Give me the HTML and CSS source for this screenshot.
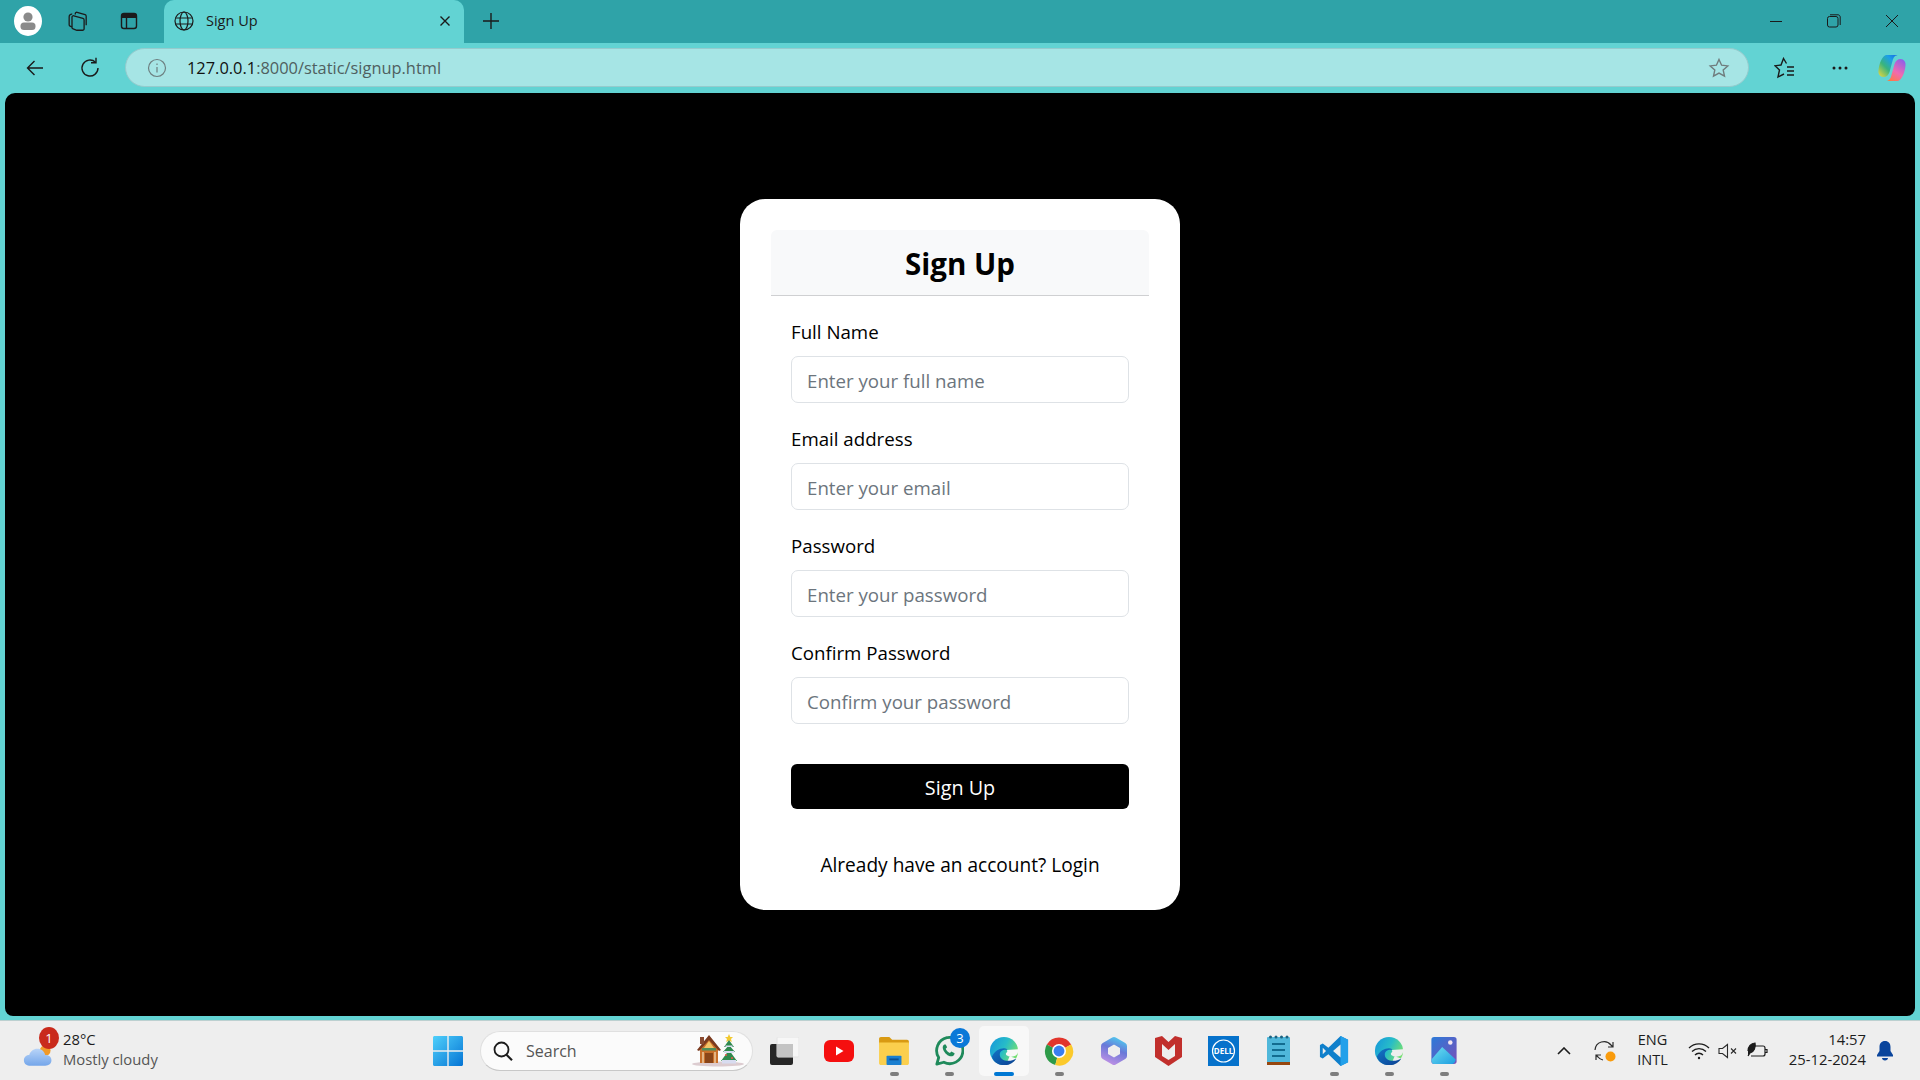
FILE: index.html
```html
<!DOCTYPE html>
<html>
	<head>
		<title>Sign Up</title>
		<link rel="stylesheet" href="styles.css">
	</head>
	<body>
		<!-- tab strip -->
		<div class="tabstrip">
			<div class="strip-left">
				<div class="avatar">
					<svg width="30" height="30" viewBox="0 0 30 30"><ellipse cx="15" cy="15" rx="14" ry="15" fill="#fff"/><circle cx="15" cy="11" r="4.600" fill="#8a8a8a"/><rect x="7.500" y="16.500" width="15" height="7.500" rx="3.500" fill="#8a8a8a"/></svg>
				</div>
				<button class="strip-btn">
					<svg width="24" height="24" viewBox="0 0 22 22" fill="none" stroke="#1b1b1b" stroke-width="1.200"><path d="M10 19.500l-3.500-1.200c-.6-.2-1-.8-1-1.400V7.500c0-1 .9-1.500 1.700-1.300l8.300 2.400c.7.200 1.100.8 1.100 1.400V18c0 1-.9 1.700-1.800 1.400z"/><path d="M8.500 5V4.300c0-.9.900-1.500 1.700-1.300l7.300 2.200c.6.200 1 .800 1 1.400v8.400"/><path d="M5.500 16.500l-1.800-.8c-.5-.2-.8-.8-.8-1.300V7c0-1.500 1.300-2.600 2.800-2.300"/></svg>
				</button>
				<button class="strip-btn">
					<svg width="20" height="20" viewBox="0 0 20 20" fill="none" stroke="#1b1b1b" stroke-width="1.400"><rect x="2.500" y="2.500" width="15" height="15" rx="2.500"/><path d="M3 5h14" stroke-width="4"/><path d="M7.500 6v11"/></svg>
				</button>
			</div>
			<div class="tab">
				<svg width="22" height="22" viewBox="0 0 22 22" fill="none" stroke="#1a1a1a" stroke-width="1.200"><circle cx="11" cy="11" r="9"/><ellipse cx="11" cy="11" rx="4" ry="9"/><path d="M2.800 8h16.400M2.800 14h16.400"/></svg>
				<span class="tab-title">Sign Up</span>
				<svg class="tab-close" width="12" height="12" viewBox="0 0 12 12" stroke="#1a1a1a" stroke-width="1.400"><path d="M1.500 1.500l9 9M10.500 1.500l-9 9"/></svg>
			</div>
			<svg class="new-tab" width="18" height="18" viewBox="0 0 18 18" stroke="#1a1a1a" stroke-width="1.400"><path d="M9 1v16M1 9h16"/></svg>
			<div class="win-controls">
				<svg width="14" height="14" viewBox="0 0 14 14" stroke="#1a1a1a"><path d="M1 7.500h12"/></svg>
				<svg width="14" height="14" viewBox="0 0 14 14" fill="none" stroke="#1a1a1a"><rect x=".5" y="2.500" width="10.500" height="10.500" rx="2"/><path d="M3 .8h8c1.200 0 2.200 1 2.200 2.200v8"/></svg>
				<svg width="14" height="14" viewBox="0 0 14 14" stroke="#1a1a1a"><path d="M1 1l12 12M13 1L1 13"/></svg>
			</div>
		</div>

		<!-- address bar row -->
		<div class="toolbar">
			<button class="nav-btn">
				<svg width="20" height="20" viewBox="0 0 20 20" fill="none" stroke="#1a1a1a" stroke-width="1.400"><path d="M18 10H2.500M9.500 3l-7 7 7 7"/></svg>
			</button>
			<button class="nav-btn">
				<svg width="20" height="22" viewBox="0 0 20 22" fill="none" stroke="#1a1a1a" stroke-width="1.400"><path d="M15.500 5.200A8 8 0 1 0 18 11"/><path d="M16 .8v5h-5"/></svg>
			</button>
			<div class="address">
				<svg width="20" height="20" viewBox="0 0 20 20" fill="none" stroke="#6d7f80" stroke-width="1.200"><circle cx="10" cy="10" r="8.500"/><path d="M10 9v5.500M10 5.500v1.500"/></svg>
				<span class="url"><span class="url-host">127.0.0.1</span>:8000/static/signup.html</span>
				<svg class="fav-star" width="22" height="22" viewBox="0 0 22 22" fill="none" stroke="#6f7c7d" stroke-width="1.400"><path d="M11 2.500l2.600 5.700 6.200.700-4.600 4.200 1.300 6.100L11 16.100l-5.500 3.100 1.300-6.100-4.600-4.200 6.200-.700z"/></svg>
			</div>
			<div class="tool-icons">
				<svg width="22" height="22" viewBox="0 0 22 22" fill="none" stroke="#1a1a1a" stroke-width="1.400"><path d="M12.500 6.500L9.500 1.500 7 8l-6 .8 4.500 4.200L4 20l6-3"/><path d="M13 10h7M13 14h7M13 18h7"/></svg>
				<svg width="16" height="4" viewBox="0 0 16 4" fill="#1a1a1a"><circle cx="2" cy="2" r="1.500"/><circle cx="8" cy="2" r="1.500"/><circle cx="14" cy="2" r="1.500"/></svg>
				<svg width="28" height="28" viewBox="0 0 28 28" fill="none"><defs><linearGradient id="cp1" x1="0" y1="1" x2="1" y2="0"><stop offset="0" stop-color="#f2d93a"/><stop offset=".4" stop-color="#38b47e"/><stop offset=".7" stop-color="#1c9fe8"/><stop offset="1" stop-color="#1560e0"/></linearGradient><linearGradient id="cp2" x1=".2" y1="1" x2=".8" y2="0"><stop offset="0" stop-color="#ff7a3d"/><stop offset=".45" stop-color="#f06ab0"/><stop offset="1" stop-color="#8f5fe8"/></linearGradient></defs><path d="M8 1h13c-4 0-5.500 2-6.500 6l-3 11c-1 3-3 5-6 5-3.500 0-5.500-3-5-6.500C1 10 4 2 8 1z" fill="url(#cp1)"/><path d="M20 27H7c4 0 5.500-2 6.500-6l3-11c1-3 3-5 6-5 3.500 0 5.500 3 5 6.500C27 18 24 26 20 27z" fill="url(#cp2)"/></svg>
			</div>
		</div>

		<!-- page -->
		<div class="viewport">
			<div class="card">
				<div class="card-header"><h2>Sign Up</h2></div>
				<form class="card-body">
					<div class="field">
						<label>Full Name</label>
						<input type="text" placeholder="Enter your full name">
					</div>
					<div class="field">
						<label>Email address</label>
						<input type="text" placeholder="Enter your email">
					</div>
					<div class="field">
						<label>Password</label>
						<input type="text" placeholder="Enter your password">
					</div>
					<div class="field">
						<label>Confirm Password</label>
						<input type="text" placeholder="Confirm your password">
					</div>
					<button type="button" class="submit">Sign Up</button>
				</form>
				<p class="login-line">Already have an account? Login</p>
			</div>
		</div>

		<!-- windows taskbar -->
		<div class="taskbar">
			<div class="weather">
				<div class="weather-icon">
					<svg width="32" height="28" viewBox="0 0 36 30"><defs><linearGradient id="cloud" x1="0" y1="0" x2="0" y2="1"><stop offset="0" stop-color="#b8d4f8"/><stop offset="1" stop-color="#74a6ea"/></linearGradient></defs><circle cx="25" cy="10" r="6" fill="#f09a2a"/><path d="M7 27c-4 0-6-3-6-6s2-6 6-6c1-4 5-7 9-7 5 0 8 3 9 7 4 0 7 2 7 6s-3 6-7 6z" fill="url(#cloud)"/></svg>
					<span class="weather-badge">1</span>
				</div>
				<div class="weather-text">
					<span class="temp">28°C</span>
					<span class="cond">Mostly cloudy</span>
				</div>
			</div>

			<div class="task-center">
				<div class="task-item start">
					<svg width="30" height="30" viewBox="0 0 30 30"><defs><linearGradient id="winblue" x1="0" y1="0" x2="1" y2="1"><stop offset="0" stop-color="#4fd0fb"/><stop offset="1" stop-color="#0574d4"/></linearGradient></defs><path d="M0 1.500C0 .7.700 0 1.500 0h12.800v14.300H0zM15.700 0h12.800c.8 0 1.500.7 1.500 1.500v12.800H15.700zM0 15.700h14.300V30H1.500C.7 30 0 29.300 0 28.500zM15.700 15.700H30v12.800c0 .8-.7 1.500-1.500 1.500H15.700z" fill="url(#winblue)"/></svg>
				</div>
				<div class="searchbox">
					<svg width="22" height="22" viewBox="0 0 22 22" fill="none" stroke="#1c1c1c" stroke-width="1.800"><circle cx="9.500" cy="9.500" r="7"/><path d="M14.500 14.800l5.500 5.500" stroke-width="2.200"/></svg>
					<span class="search-label">Search</span>
					<svg class="search-art" width="54" height="34" viewBox="0 0 54 34"><ellipse cx="27" cy="30" rx="26" ry="2.500" fill="#dcccd0"/><path d="M9 14L18 3l9 11v15H9z" fill="#c9702a"/><path d="M6 16L18 1l12 15-2 1L18 6 8 17z" fill="#7a3a1e"/><rect x="9" y="3" width="4" height="7" fill="#8a4a30"/><path d="M18 7l5 7H13z" fill="#f2c468"/><rect x="11" y="14" width="14" height="2.500" fill="#4f8f5a"/><rect x="14" y="19" width="8" height="10" fill="#8a4518"/><path d="M12 18v11M24 18v11" stroke="#f6e2c0" stroke-width="1.200"/><path d="M38 0l1.300 3H42l-2 2 .8 3L38 6.500 35.200 8l.8-3-2-2h2.700z" fill="#f2c930"/><path d="M38 6l5 7H33zM38 11l6 7H32zM38 16l8 11H30z" fill="#2f8a4e"/><path d="M31 26h14v3.500H31zM33 17h10v2H33zM34.500 11.500h7v1.500h-7z" fill="#d8dcf0"/><circle cx="35" cy="21" r="1" fill="#e85a4a"/><circle cx="41" cy="24" r="1" fill="#e85a4a"/></svg>
				</div>
				<div class="task-item">
					<svg width="30" height="28" viewBox="0 0 30 28"><rect x="1" y="7" width="23" height="21" rx="2" fill="#262626"/><rect x="8" y="0" width="22" height="20" rx="1" fill="#f7f7f7" stroke="#e4e4e4"/><rect x="8" y="7" width="16" height="13" fill="#c4c4c4"/></svg>
				</div>
				<div class="task-item">
					<svg width="30" height="22" viewBox="0 0 30 22"><rect width="30" height="22" rx="6" fill="#f50f0f"/><path d="M12 6.500l7.500 4.500-7.500 4.500z" fill="#fff"/></svg>
				</div>
				<div class="task-item running">
					<svg width="30" height="28" viewBox="0 0 32 30"><path d="M0 2c0-1 .7-2 2-2h9l3 3h16c1 0 2 .8 2 2v3H0z" fill="#d99a12"/><path d="M0 6h32v22c0 1-1 2-2 2H2c-1 0-2-1-2-2z" fill="#fbcf4d"/><rect x="8" y="20" width="16" height="10" rx="1" fill="#1a7fd0"/><rect x="11" y="23" width="10" height="2" fill="#0b4f92"/></svg>
				</div>
				<div class="task-item running">
					<svg width="30" height="30" viewBox="0 0 32 32" fill="none"><path d="M3 30l2-7A14 14 0 1 1 10.500 28z" stroke="#1f8a5b" stroke-width="3" stroke-linejoin="round"/><path d="M11 9c-1.500 1-2 2.500-1.500 4.500 1 3.500 4 7 7.500 8 2 .5 3.500 0 4.500-1.500l.5-1.500-3.500-2-1.500 1.500c-2-.5-4-3-4.500-4.500l1.500-1.500L12.500 9z" fill="#1f8a5b"/></svg>
					<span class="task-badge">3</span>
				</div>
				<div class="task-item active">
					<svg width="30" height="30" viewBox="0 0 32 32"><use href="#edge-shape" color="#f8f8f8"/></svg>
				</div>
				<div class="task-item running">
					<svg width="30" height="30" viewBox="0 0 32 32"><path d="M16 16L3 9A15 15 0 0 1 29 9z" fill="#e2352c"/><path d="M16 16L3 9a15 15 0 0 0 9 22z" fill="#2d9a48"/><path d="M16 16l13-7a15 15 0 0 1-17 22z" fill="#fbc92b"/><circle cx="16" cy="16" r="7.500" fill="#fff"/><circle cx="16" cy="16" r="5.800" fill="#3a7ef0"/></svg>
				</div>
				<div class="task-item">
					<svg width="28" height="30" viewBox="0 0 28 30" fill="none"><defs><linearGradient id="m365" gradientUnits="userSpaceOnUse" x1="22" y1="3" x2="12" y2="28"><stop offset="0" stop-color="#4fc8ee"/><stop offset=".45" stop-color="#6a78d8"/><stop offset="1" stop-color="#b88fe4"/></linearGradient></defs><path d="M14 4.500l9.500 5.500v10L14 25.500 4.500 20V10z" stroke="url(#m365)" stroke-width="7" stroke-linejoin="round"/></svg>
				</div>
				<div class="task-item">
					<svg width="27" height="30" viewBox="0 0 27 30"><path d="M0 2l7-2 6.500 6L20 0l7 2v19l-13.500 9L0 21z" fill="#c12f2c"/><path d="M7 8l6.500 6L20 8v12l-6.500 4L7 20z" fill="#eeeeee"/></svg>
				</div>
				<div class="task-item">
					<svg width="31" height="30" viewBox="0 0 31 30"><rect width="31" height="30" fill="#0672cb"/><circle cx="15.500" cy="15" r="11" fill="none" stroke="#fff" stroke-width="1.200"/></svg>
					<span class="dell-word">DELL</span>
				</div>
				<div class="task-item">
					<svg width="23" height="31" viewBox="0 0 23 31"><rect y="2" width="23" height="26" rx="1" fill="#4fb7da"/><rect y="27" width="23" height="3" fill="#96470f"/><g fill="#1d6280"><circle cx="3.500" cy="2" r="1.500"/><circle cx="9" cy="2" r="1.500"/><circle cx="14.500" cy="2" r="1.500"/><circle cx="20" cy="2" r="1.500"/></g><path d="M5 9h13M5 15h13M5 21h13" stroke="#126c90" stroke-width="2"/></svg>
				</div>
				<div class="task-item running">
					<svg width="30" height="30" viewBox="0 0 32 32"><path d="M23 0l8 4v24l-8 4-13-12.500-6 4.500-3-1.500V9.500L4 8l6 4.500z" fill="#0f7fcb"/><path d="M23 0l8 4v24l-8 4z" fill="#22a0ea"/><path d="M23 9l-8 7 8 7z" fill="#eeeeee"/><path d="M4 12.500L7.500 16 4 19.500z" fill="#eeeeee"/></svg>
				</div>
				<div class="task-item running">
					<svg width="30" height="30" viewBox="0 0 32 32"><use href="#edge-shape" color="#eeeeee"/></svg>
				</div>
				<div class="task-item running">
					<svg width="26" height="27" viewBox="0 0 28 30"><defs><linearGradient id="photo" x1="0" y1="0" x2="1" y2="1"><stop offset="0" stop-color="#2b7ad8"/><stop offset="1" stop-color="#7a4fb8"/></linearGradient><linearGradient id="photo2" x1="0" y1="0" x2="1" y2="1"><stop offset="0" stop-color="#6fe0f0"/><stop offset="1" stop-color="#1c9ce0"/></linearGradient></defs><rect width="28" height="30" rx="3" fill="url(#photo)"/><circle cx="21" cy="6" r="2.500" fill="#f4e6f0"/><path d="M0 25l12-14 15 14c-.5 3-2 5-4 5H3c-2 0-3-2-3-5z" fill="url(#photo2)"/></svg>
				</div>
			</div>

			<div class="tray">
				<svg class="tray-chev" width="14" height="8" viewBox="0 0 14 8" fill="none" stroke="#1c1c1c" stroke-width="1.600"><path d="M1 7l6-6 6 6"/></svg>
				<div class="tray-sync">
					<svg width="24" height="24" viewBox="0 0 24 24" fill="none" stroke="#2a2a2a" stroke-width="1.200"><path d="M2 11a9 9 0 0 1 16-5l2 2M20 3v5h-5"/><path d="M10 21a8 8 0 0 1-5-3l-2-2M3 21v-5h5"/><circle cx="17.500" cy="17.500" r="5" fill="#f99b0c" stroke="none"/></svg>
				</div>
				<div class="lang"><span>ENG</span><span>INTL</span></div>
				<div class="tray-status">
					<svg width="22" height="18" viewBox="0 0 22 18" fill="none" stroke="#1c1c1c" stroke-width="1.300"><path d="M1 6a14 14 0 0 1 20 0M4 9.500a10 10 0 0 1 14 0M7 13a5.500 5.500 0 0 1 8 0"/><circle cx="11" cy="16" r="1.200" fill="#1c1c1c" stroke="none"/></svg>
					<svg width="20" height="16" viewBox="0 0 20 16" fill="none" stroke="#2a2a2a" stroke-width="1.100"><path d="M1 5.500h3.500L9.500 1.500v13l-5-4H1z"/><path d="M13 5.500l5 5M18 5.500l-5 5"/></svg>
					<svg width="22" height="18" viewBox="0 0 22 18" fill="none" stroke="#1c1c1c" stroke-width="1.200"><path d="M8 4h9c1 0 2 1 2 2v6c0 1-1 2-2 2H5"/><path d="M19 7.500h2v3h-2"/><path d="M2 9c0-4 3-8 7-8 1 4-1 9-5 10l-2 3" fill="#1c1c1c"/></svg>
				</div>
				<div class="clock"><span>14:57</span><span>25-12-2024</span></div>
				<svg width="18" height="20" viewBox="0 0 18 20"><path d="M9 0c-3.500 0-5.500 2.500-5.500 6v4L1 14v1.500h16V14l-2.500-4V6C14.500 2.500 12.500 0 9 0z" fill="#0a459c"/><path d="M6 17h6c0 1.500-1.300 2.500-3 2.500S6 18.500 6 17z" fill="#0a459c"/></svg>
			</div>
		</div>

		<svg class="defs-only" width="0" height="0">
			<defs>
				<linearGradient id="edgeA" x1="0" y1="0" x2="1" y2=".5"><stop offset="0" stop-color="#1595dc"/><stop offset=".55" stop-color="#27bcc8"/><stop offset="1" stop-color="#74e070"/></linearGradient>
				<linearGradient id="edgeB" x1="0" y1="0" x2="1" y2="1"><stop offset="0" stop-color="#1277c8"/><stop offset="1" stop-color="#0b3f91"/></linearGradient>
				<g id="edge-shape">
					<circle cx="16" cy="16" r="15" fill="url(#edgeA)"/>
					<path d="M31 17c-.5 3-3 5-7 5-3 0-6-1-6-3 0-1 1-1.500 1.500-2.500 0-.5 0-1-.5-1.500l12-1zM29 24l-7-2.500-4 9.500 6-2z" fill="currentColor"/>
					<path d="M3 22c3-6 8-9 13-9 2 0 3.500 1 3.500 2-4-1-8 1-8 5 0 4 4 6.500 9 6.500 3 0 6-1 8.500-2.500-2.500 4.500-7.500 7.500-13 7C10 31 5 28 3 22z" fill="url(#edgeB)"/>
				</g>
			</defs>
		</svg>
	</body>
</html>
```
FILE: styles.css
```css
* {
	box-sizing: border-box;
}

html,
body {
	height: 100%;
}

body {
	margin: 0;
	display: flex;
	flex-direction: column;
	height: 1080px;
	overflow: hidden;
	background-color: #62d3d3;
	font-family: "Open Sans", "Noto Sans", Arial, sans-serif;
	color: #000;
}

button {
	background: none;
	border: none;
	padding: 0;
	font-family: inherit;
}

.defs-only {
	position: absolute;
}

/* tab strip */
.tabstrip {
	height: 43px;
	flex-shrink: 0;
	background-color: #2fa3a8;
	display: flex;
	align-items: center;
	padding-bottom: 2px;
}

.strip-left {
	display: flex;
	align-items: center;
	padding-left: 13px;
	width: 164px;
}

.avatar {
	width: 30px;
	height: 30px;
	margin-right: 23px;
}

.strip-btn {
	width: 24px;
	height: 24px;
	margin-right: 29px;
	display: flex;
	align-items: center;
	justify-content: center;
}

.tab {
	width: 300px;
	height: 43px;
	margin-bottom: -2px;
	background-color: #62d3d3;
	border-radius: 10px 10px 0 0;
	display: flex;
	align-items: center;
	padding: 0 13px 2px 9px;
	font-size: 14.500px;
	color: #1a1a1a;
}

.tab-title {
	margin-left: 11px;
	flex: 1;
}

.new-tab {
	margin-left: 18px;
}

.win-controls {
	margin-left: auto;
	display: flex;
	gap: 44px;
	padding-right: 21px;
}

/* address row */
.toolbar {
	height: 50px;
	flex-shrink: 0;
	display: flex;
	align-items: center;
	padding: 0 0 1px 25px;
}

.nav-btn {
	width: 20px;
	height: 22px;
	margin-right: 35px;
	display: flex;
	align-items: center;
}

.nav-btn + .nav-btn {
	margin-right: 25px;
}

.address {
	width: 1624px;
	height: 39px;
	background-color: #a6e5e5;
	border: 1px solid #95cbcd;
	border-radius: 20px;
	display: flex;
	align-items: center;
	padding: 0 18px 0 21px;
	font-size: 16.400px;
}

.url {
	margin-left: 20px;
	flex: 1;
	color: #4f5f60;
}

.url-host {
	color: #111;
}

.tool-icons {
	display: flex;
	align-items: center;
	margin-left: 25px;
}

.tool-icons svg:nth-child(2) {
	margin-left: 36px;
}

.tool-icons svg:nth-child(3) {
	margin-left: 30px;
}

/* page area */
.viewport {
	height: 923px;
	flex-shrink: 0;
	margin: 0 5px;
	background-color: #000;
	border-radius: 10px 10px 8px 8px;
	padding-top: 106px;
	display: flex;
	justify-content: center;
	align-items: flex-start;
}

.card {
	width: 440px;
	height: 711px;
	background-color: #fff;
	border-radius: 25px;
	padding: 31px;
}

.card-header {
	height: 66px;
	padding-top: 1px;
	background-color: #f8f9fa;
	border-bottom: 1px solid #cfd0d2;
	border-radius: 6px 6px 0 0;
	display: flex;
	align-items: center;
	justify-content: center;
}

.card-header h2 {
	margin: 0;
	font-size: 29.500px;
	font-weight: 700;
}

.card-body {
	padding: 20px 20px 0;
}

.field {
	margin-bottom: 20px;
}

.field label {
	display: block;
	height: 30px;
	padding-top: 1px;
	line-height: 30px;
	font-size: 18.700px;
	margin-bottom: 10px;
}

.field input {
	display: block;
	width: 100%;
	height: 47px;
	padding: 2px 15px 0;
	border: 1px solid #dee2e6;
	border-radius: 7px;
	font-family: inherit;
	font-size: 18.700px;
	background: #fff;
}

.field input::placeholder {
	color: #6c757d;
	opacity: 1;
}

.submit {
	display: block;
	width: 100%;
	height: 45px;
	padding-top: 2px;
	margin-top: 40px;
	background-color: #000;
	color: #fff;
	border-radius: 6px;
	font-size: 19.800px;
}

.login-line {
	margin: 41px 0 0;
	text-align: center;
	font-size: 19.100px;
	line-height: 30px;
}

/* taskbar */
.taskbar {
	height: 60px;
	margin-top: 4px;
	flex-shrink: 0;
	background-color: #eeeeee;
	border-top: 1px solid #bcd0d0;
	display: flex;
	align-items: center;
	position: relative;
	font-size: 14.800px;
	color: #1c1c1c;
}

.weather {
	display: flex;
	align-items: center;
	width: 430px;
	padding-left: 23px;
}

.weather-icon {
	width: 36px;
	height: 36px;
	position: relative;
	display: flex;
	align-items: flex-end;
}

.weather-badge {
	position: absolute;
	left: 16px;
	top: -6px;
	width: 20px;
	height: 22px;
	border-radius: 50%;
	background-color: #c92a1c;
	color: #fff;
	font-size: 13px;
	line-height: 22px;
	text-align: center;
}

.weather-text {
	display: flex;
	flex-direction: column;
	margin-left: 4px;
	padding-bottom: 4px;
	line-height: 20px;
}

.cond {
	color: #555;
}

.task-center {
	display: flex;
	align-items: center;
}

.task-item {
	width: 55px;
	height: 50px;
	display: flex;
	align-items: center;
	justify-content: center;
	position: relative;
	flex-shrink: 0;
}

.task-item.start {
	width: 35px;
	margin-right: 15px;
}

.task-item.running::after,
.task-item.active::after {
	content: "";
	position: absolute;
	bottom: 0;
	left: 50%;
	width: 9px;
	height: 4px;
	margin-left: -4px;
	border-radius: 2px;
	background-color: #7d7d7d;
}

.task-item.active {
	width: 50px;
	margin: 0 2.500px;
	background-color: #f8f8f8;
	border-radius: 5px;
}

.task-item.active::after {
	width: 20px;
	margin-left: -10px;
	background-color: #0078d4;
}

.task-badge {
	position: absolute;
	right: 6px;
	top: 2px;
	width: 20px;
	height: 20px;
	border-radius: 50%;
	background-color: #0a78d8;
	color: #fff;
	font-size: 13px;
	line-height: 20px;
	text-align: center;
}

.dell-word {
	position: absolute;
	left: 0;
	right: 0;
	text-align: center;
	top: 19px;
	color: #fff;
	font-size: 8px;
	font-weight: 700;
}

.searchbox {
	width: 273px;
	height: 40px;
	margin-right: 3px;
	flex-shrink: 0;
	background-color: #fbfbfb;
	border: 1px solid #e0e0e0;
	border-bottom-color: #c8c8c8;
	border-radius: 20px;
	display: flex;
	align-items: center;
	padding: 0 7px 0 11px;
}

.search-label {
	margin-left: 12px;
	flex: 1;
	font-size: 16px;
	color: #555;
}

.tray {
	margin-left: auto;
	display: flex;
	align-items: center;
	padding-right: 26px;
}

.tray-sync {
	display: flex;
	margin-left: 22px;
}

.lang {
	display: flex;
	flex-direction: column;
	align-items: center;
	margin-left: 20px;
	padding-bottom: 2px;
	line-height: 20px;
	font-size: 14.500px;
}

.tray-status {
	display: flex;
	align-items: center;
	gap: 8px;
	margin-left: 20px;
}

.clock {
	display: flex;
	flex-direction: column;
	align-items: flex-end;
	margin: 0 10px 0 21px;
	padding-bottom: 4px;
	line-height: 20px;
}
```
